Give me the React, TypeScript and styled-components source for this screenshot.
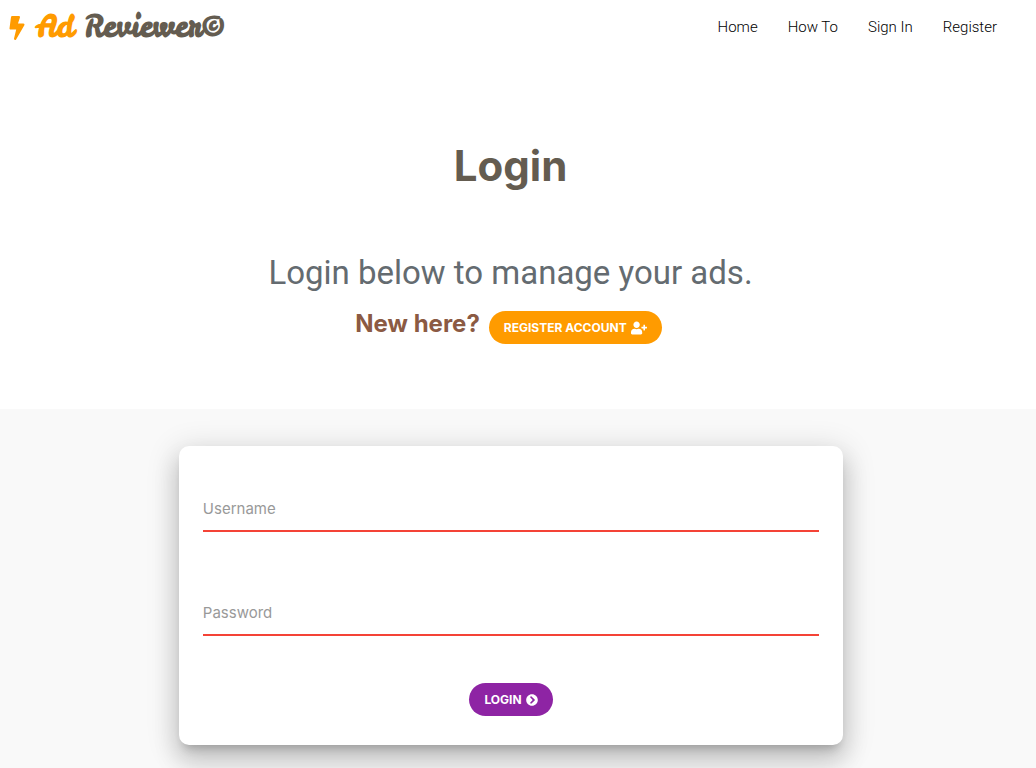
import React from "react";
import styled, { createGlobalStyle } from "styled-components";
import { FaBolt, FaUserPlus, FaChevronCircleRight } from "react-icons/fa";

const GlobalStyle = createGlobalStyle`
  *, *::before, *::after { box-sizing: border-box; }
  body {
    margin: 0;
    background: #fff;
    color: #000;
    font-family: Inter, "Liberation Sans", sans-serif;
  }
`;

const Page = styled.div`
  display: flex;
  flex-direction: column;
  min-height: 100vh;
`;

const Header = styled.header`
  display: flex;
  align-items: center;
  justify-content: space-between;
  height: 54px;
  padding: 0 39px 0 8px;
`;

const Brand = styled.a`
  display: flex;
  align-items: center;
  gap: 10px;
  padding-bottom: 2px;
  color: #645c50;
  font: 700 30px/40px "Leckerli One", Lato, sans-serif;
  text-decoration: none;

  svg {
    width: 18px;
    height: 24px;
  }
`;

const Accent = styled.span`
  color: #ff9b00;
`;

const BoltMark = styled(Accent)`
  display: flex;
  padding-top: 4px;
`;

const Nav = styled.nav`
  display: flex;
  gap: 30px;
`;

const NavLink = styled.a`
  color: #000;
  font-family: Roboto, sans-serif;
  font-size: 15px;
  font-weight: 300;
  line-height: 20px;
  text-decoration: none;
`;

const Hero = styled.section`
  display: flex;
  flex-direction: column;
  align-items: center;
  padding: 84px 15px 65px 0;
`;

const Title = styled.h1`
  margin: 0 0 56px;
  color: #645c50;
  font-size: 42px;
  font-weight: 700;
  line-height: 56px;
`;

const Subtitle = styled.p`
  margin: 0 0 15px;
  color: #646b70;
  font-family: Roboto, sans-serif;
  font-size: 33px;
  font-weight: 400;
  line-height: 46px;
`;

const Prompt = styled.div`
  display: flex;
  gap: 9px;
  padding-right: 4px;
  color: #8b5a43;
  font-size: 24px;
  font-weight: 700;
  line-height: 26px;
`;

const Pill = styled.button<{ $tone: string }>`
  display: inline-flex;
  align-items: center;
  gap: 4px;
  height: 33px;
  padding: 0 15px;
  border: 0;
  border-radius: 17px;
  background: ${(p) => p.$tone};
  color: #fff;
  font: 700 12px/18px Inter, "Liberation Sans", sans-serif;
  text-transform: uppercase;
  cursor: pointer;
`;

const FormSection = styled.main`
  flex: 1;
  padding: 37px 14px 23px 0;
  background: #f9f9f9;
`;

const Card = styled.form`
  display: flex;
  flex-direction: column;
  align-items: center;
  width: 65%;
  margin: 0 auto;
  padding: 41px 24px 29px;
  border-radius: 10px;
  background: #fff;
  box-shadow:
    0 16px 24px 2px rgba(0, 0, 0, 0.14),
    0 6px 30px 5px rgba(0, 0, 0, 0.12),
    0 8px 10px -5px rgba(0, 0, 0, 0.2);
`;

const Field = styled.input`
  width: 100%;
  height: 45px;
  margin-bottom: 59px;
  padding: 0;
  border: 0;
  border-bottom: 2px solid #f44336;
  border-radius: 0;
  outline: 0;
  background: transparent;
  color: #333;
  font: 400 15px/20px Inter, "Liberation Sans", sans-serif;

  &::placeholder {
    color: #999;
    opacity: 1;
  }

  &:last-of-type {
    margin-bottom: 47px;
  }
`;

const links = ["Home", "How To", "Sign In", "Register"];

export default function App() {
  return (
    <Page>
      <GlobalStyle />
      <Header>
        <Brand href="#">
          <BoltMark>
            <FaBolt aria-hidden="true" />
          </BoltMark>
          <Accent>Ad</Accent>
          <span>Reviewer©</span>
        </Brand>
        <Nav>
          {links.map((link) => (
            <NavLink key={link} href="#">
              {link}
            </NavLink>
          ))}
        </Nav>
      </Header>
      <Hero>
        <Title>Login</Title>
        <Subtitle>Login below to manage your ads.</Subtitle>
        <Prompt>
          New here?
          <Pill type="button" $tone="#ff9b00">
            Register Account <FaUserPlus size={16} aria-hidden="true" />
          </Pill>
        </Prompt>
      </Hero>
      <FormSection>
        <Card onSubmit={(event: React.FormEvent) => event.preventDefault()}>
          <Field type="text" name="username" placeholder="Username" aria-label="Username" />
          <Field type="password" name="password" placeholder="Password" aria-label="Password" />
          <Pill type="submit" $tone="#8e24a4">
            Login <FaChevronCircleRight size={12} aria-hidden="true" />
          </Pill>
        </Card>
      </FormSection>
    </Page>
  );
}
